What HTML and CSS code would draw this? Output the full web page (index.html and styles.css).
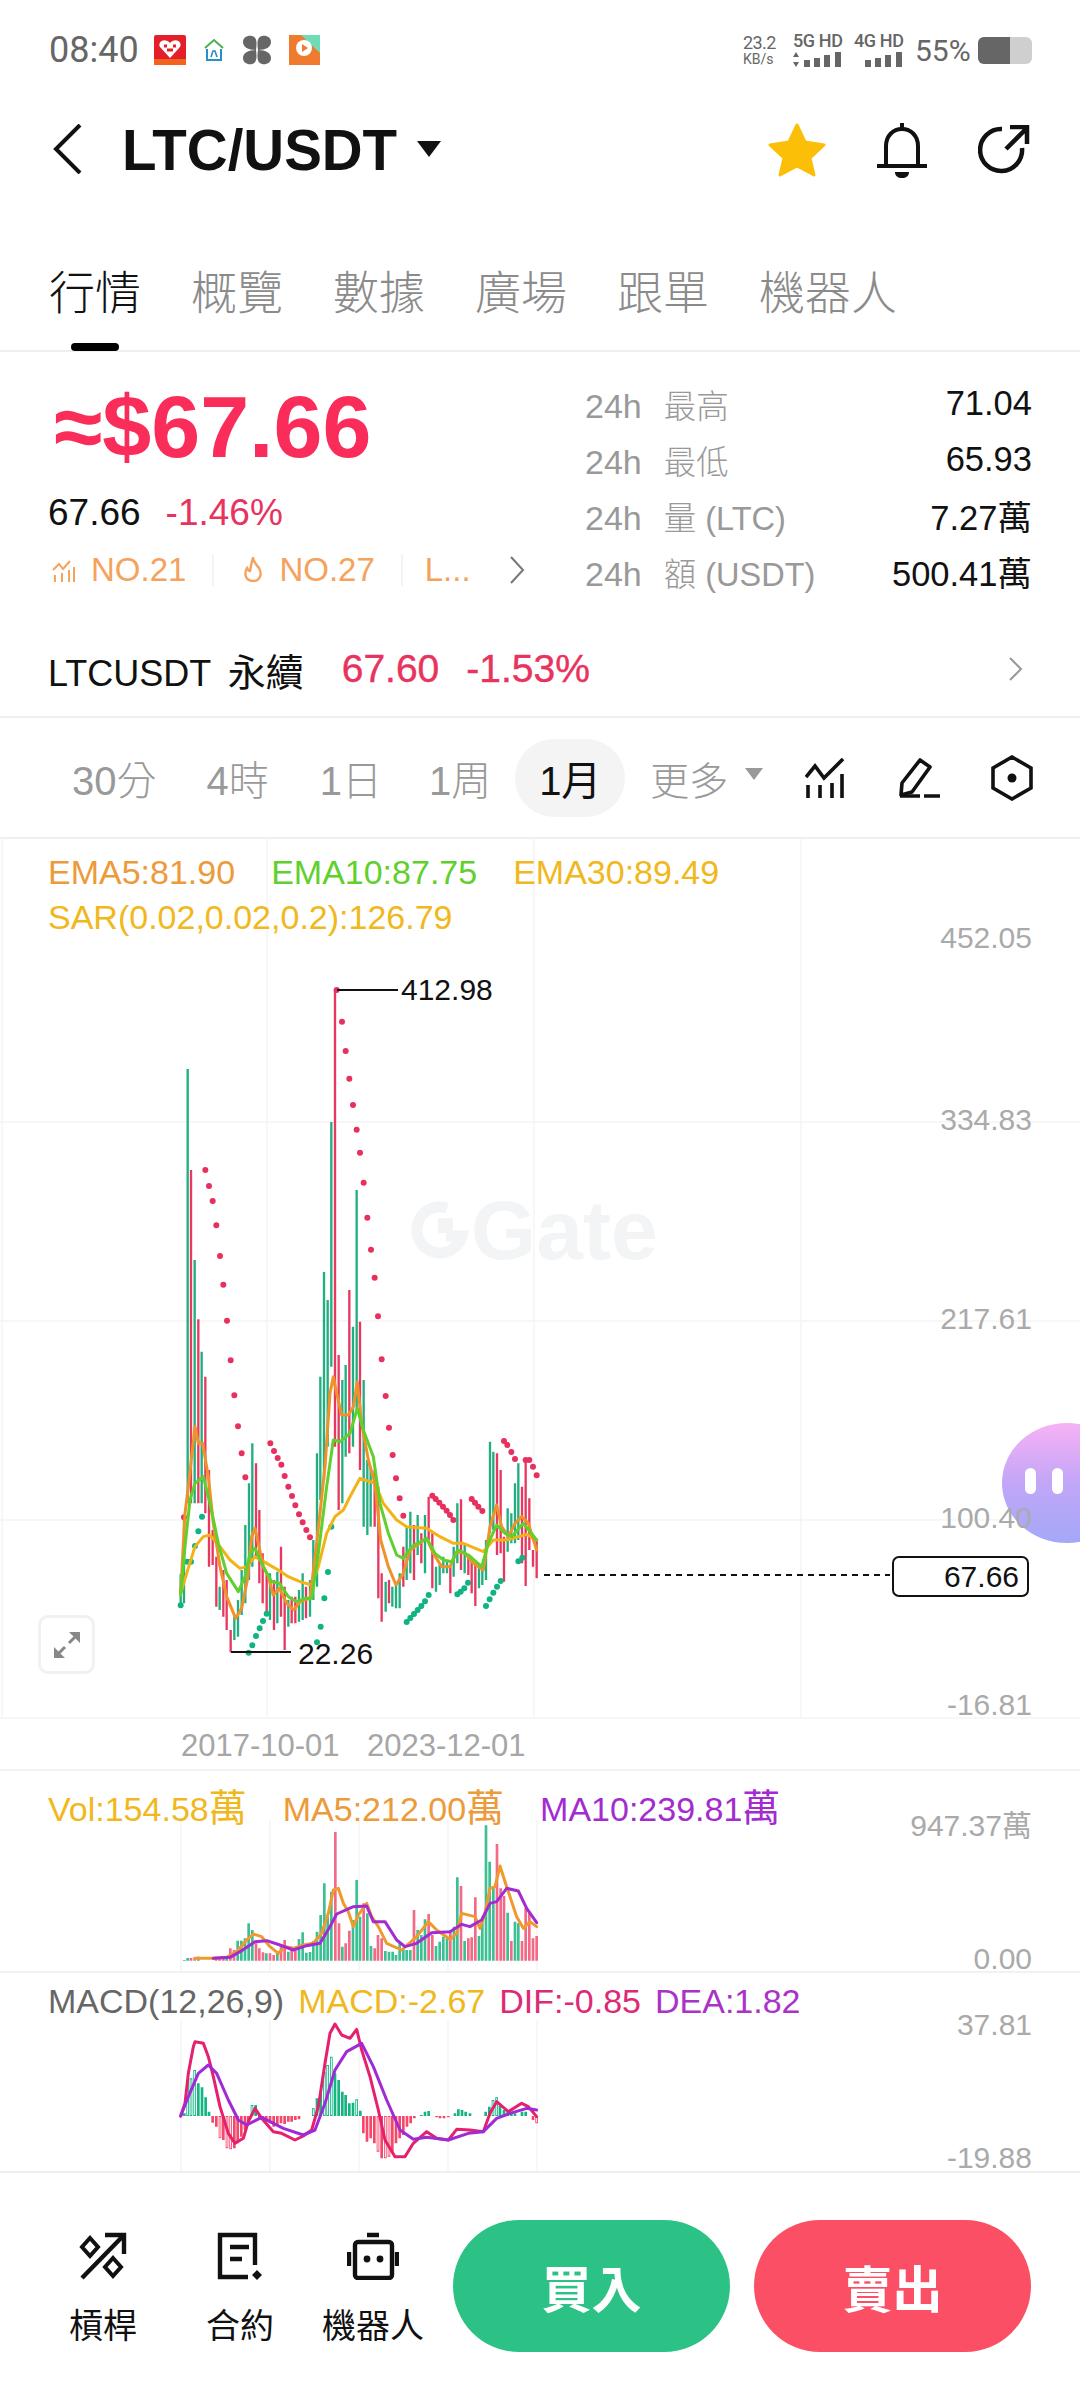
FILE: index.html
```html
<!DOCTYPE html>
<html lang="zh-Hant">
<head>
<meta charset="utf-8">
<title>LTC/USDT</title>
<link rel="stylesheet" href="styles.css">
</head>
<body>
<div class="screen">
  <div class="status">
    <div class="status-left">
      <span class="time">08:40</span>
      <svg class="app-icon" width="32" height="30" viewBox="0 0 32 30"><rect width="32" height="30" rx="2" fill="#e3202a"/><path d="M16 23 6 12c-3-5 5-10 10-4 5-6 13-1 10 4z" fill="#fff"/><path d="M10 11h3M19 11h3M13 15h6" stroke="#e3202a" stroke-width="3"/><rect y="24" width="32" height="6" fill="#f0641e"/></svg>
      <svg class="app-icon" width="22" height="24" viewBox="0 0 22 24"><path d="M2 10 11 2l9 8" fill="none" stroke="#4caf50" stroke-width="2"/><path d="M4 11v11h14V11" fill="none" stroke="#2a8fc4" stroke-width="2"/><path d="M8 19l2-6h2l2 6" fill="none" stroke="#2a8fc4" stroke-width="1.6"/></svg>
      <svg class="app-icon" width="30" height="30" viewBox="0 0 30 30"><path d="M14 15C6 15 1 12 1 7s5-7 9-6c5 1 5 7 4 14zM16 15c8 0 13-3 13-8s-5-7-9-6c-5 1-5 7-4 14zM14 15c-8 0-13 3-13 8s5 7 9 6c5-1 5-7 4-14zM16 15c8 0 13 3 13 8s-5 7-9 6c-5-1-5-7-4-14z" fill="#666"/></svg>
      <svg class="app-icon" width="31" height="30" viewBox="0 0 31 30"><rect width="31" height="30" fill="#f07a2d"/><path d="M12 0h19v18z" fill="#6fdcb8"/><circle cx="15" cy="13" r="8" fill="#fff"/><path d="M13 9l6 4-6 4z" fill="#f07a2d"/></svg>
    </div>
    <div class="status-right">
      <div class="speed"><span>23.2</span><span class="speed-unit">KB/s</span></div>
      <div class="net">
        <span class="net-label">5G HD</span>
        <svg width="50" height="15" viewBox="0 0 50 15"><path d="M3 0l3 5H0zM3 15l3-5H0z" fill="#666"/><path d="M14 15V8M24 15V6M34 15V3M45 15V0" stroke="#666" stroke-width="6"/></svg>
      </div>
      <div class="net">
        <span class="net-label">4G HD</span>
        <svg width="50" height="15" viewBox="0 0 50 15"><path d="M14 15V8M24 15V6M34 15V3M45 15V0" stroke="#666" stroke-width="6"/></svg>
      </div>
      <span class="battery-pct">55%</span>
      <div class="battery"><div class="battery-fill"></div></div>
    </div>
  </div>

  <div class="nav">
    <svg class="back" width="30" height="50" viewBox="0 0 30 50"><path d="M28 1 4 25l24 24" fill="none" stroke="#111" stroke-width="4"/></svg>
    <span class="pair">LTC/USDT</span>
    <svg class="pair-caret" width="24" height="16" viewBox="0 0 24 16"><path d="M0 0h24L12 16z" fill="#111"/></svg>
    <div class="nav-icons">
      <svg width="58" height="54" viewBox="0 0 58 54"><path d="M29 2l8 17 19 3-14 13 4 17-17-9-17 9 4-17L2 22l19-3z" fill="#fcbf07" stroke="#fcbf07" stroke-width="3" stroke-linejoin="round"/></svg>
      <svg width="50" height="56" viewBox="0 0 50 56"><path d="M9 44V24C9 14 16 7 25 7s16 7 16 17v20" fill="none" stroke="#111" stroke-width="4"/><path d="M25 1v6M0 44h50" stroke="#111" stroke-width="4"/><path d="M18 50h14c0 4-3 6-7 6s-7-2-7-6z" fill="#111"/></svg>
      <svg width="52" height="50" viewBox="0 0 52 50"><path d="M44 23a21 21 0 1 1-20-19" fill="none" stroke="#111" stroke-width="4.5"/><path d="M28 24 48 4M32 2h17v17" fill="none" stroke="#111" stroke-width="4.5"/></svg>
    </div>
  </div>

  <div class="tabs">
    <span class="tab tab-active">行情</span>
    <span class="tab">概覽</span>
    <span class="tab">數據</span>
    <span class="tab">廣場</span>
    <span class="tab">跟單</span>
    <span class="tab">機器人</span>
  </div>

  <div class="summary">
    <div class="summary-left">
      <div class="price">≈$67.66</div>
      <div class="sub-price"><span>67.66</span><span class="down">-1.46%</span></div>
      <div class="ranks">
        <svg width="24" height="24" viewBox="0 0 24 24"><path d="M1 12l6-6 4 5 7-8" fill="none" stroke="#f5a25d" stroke-width="2"/><path d="M3 24v-7M10 24v-9M17 24V12M22 24V9" stroke="#f5a25d" stroke-width="2"/></svg>
        <span class="rank">NO.21</span>
        <span class="rank-sep"></span>
        <svg width="22" height="26" viewBox="0 0 22 26"><path d="M11 1c1 5 3 6 6 10 3 5 2 13-6 13S2 16 5 11c1 2 2 3 3 3 1-4 1-8 3-13z" fill="none" stroke="#f5a25d" stroke-width="2.4"/></svg>
        <span class="rank">NO.27</span>
        <span class="rank-sep rank-sep-last"></span>
        <span class="rank">L...</span>
        <svg class="rank-more" width="16" height="28" viewBox="0 0 16 28"><path d="M2 1l12 13L2 27" fill="none" stroke="#777" stroke-width="2"/></svg>
      </div>
    </div>
    <div class="stats">
      <div class="stat"><span class="stat-label"><span class="stat-key">24h</span>最高</span><span>71.04</span></div>
      <div class="stat"><span class="stat-label"><span class="stat-key">24h</span>最低</span><span>65.93</span></div>
      <div class="stat"><span class="stat-label"><span class="stat-key">24h</span>量 (LTC)</span><span>7.27萬</span></div>
      <div class="stat"><span class="stat-label"><span class="stat-key">24h</span>額 (USDT)</span><span>500.41萬</span></div>
    </div>
  </div>

  <div class="perp">
    <span class="perp-name">LTCUSDT <span class="perp-cjk">永續</span></span>
    <span class="perp-val">67.60</span>
    <span class="perp-val">-1.53%</span>
    <svg class="perp-more" width="16" height="24" viewBox="0 0 16 24"><path d="M2 1l11 11L2 23" fill="none" stroke="#999" stroke-width="2"/></svg>
  </div>

  <div class="timebar">
    <span class="tf tf-30">30分</span>
    <span class="tf tf-4">4時</span>
    <span class="tf tf-1d">1日</span>
    <span class="tf tf-1w">1周</span>
    <span class="tf tf-active">1月</span>
    <span class="tf tf-more">更多</span>
    <svg class="tf-caret" width="18" height="12" viewBox="0 0 18 12"><path d="M0 0h18L9 12z" fill="#999"/></svg>
    <div class="tools">
      <svg width="40" height="40" viewBox="0 0 40 40"><path d="M1 19 10 8l9 12L38 1" fill="none" stroke="#111" stroke-width="3.6"/><path d="M3 40V27M15 40V27M27 40V25M37 40V16" stroke="#111" stroke-width="3.6"/></svg>
      <svg width="42" height="40" viewBox="0 0 42 40"><path d="M2 37 3 25 21 2l10 7-18 25z" fill="none" stroke="#111" stroke-width="3.6" stroke-linejoin="round"/><path d="M1 38h20M25 38h16" stroke="#111" stroke-width="3.6"/></svg>
      <svg width="42" height="46" viewBox="0 0 42 46"><path d="M21 2 40 13v20L21 44 2 33V13z" fill="none" stroke="#111" stroke-width="3.6"/><circle cx="21" cy="23" r="4.5" fill="#111"/></svg>
    </div>
  </div>

  <section class="panel panel-main">
    <div class="bubble"><i></i><i></i></div>
    <svg class="plot" width="1080" height="930" viewBox="0 839 1080 930">
      <path class="grid" d="M0 1122H1080M0 1321H1080M0 1520H1002M0 1718H1080M267 839V1718M534 839V1718M801 839V1718M2 839V1718"/>
      <text class="axis" x="1032" y="948" text-anchor="end">452.05</text>
      <text class="axis" x="1032" y="1130" text-anchor="end">334.83</text>
      <text class="axis" x="1032" y="1329" text-anchor="end">217.61</text>
      <text class="axis" x="1032" y="1528" text-anchor="end">100.40</text>
      <text class="axis" x="1032" y="1715" text-anchor="end">-16.81</text>
      <text class="axis date" x="181" y="1756">2017-10-01</text>
      <text class="axis date" x="367" y="1756">2023-12-01</text>
      <g class="watermark">
        <path d="M447 1208a23 23 0 1 0 15 28h-16" fill="none" stroke="#f2f4f5" stroke-width="11"/>
        <rect x="438" y="1218" width="15" height="15" fill="#f2f4f5"/>
        <text x="471" y="1259">Gate</text>
      </g>
      <g transform="translate(140 1280) scale(.33333)">
        <path class="candle candle-g" d="M122 883V975M132 720V970M143 -633V670M164 -60V670M185 215V670M239 920V990M283 1010V1080M294 960V1070M305 870V1005M316 735V970M327 610V900M337 490V860M390 880V1020M412 875V1030M445 960V1040M477 930V1025M488 880V1020M510 900V1010M520 780V960M531 520V920M541 290V660M552 -24V600M563 60V500M574 -474V260M607 300V670M617 255V530M639 140V500M650 -270V400M671 300V740M682 540V765M692 560V740M737 905V995M757 920V980M768 915V985M779 880V985M800 740V900M811 695V880M833 705V825M855 705V880M888 860V935M899 855V915M910 830V880M921 840V880M941 800V890M952 670V850M974 790V880M1017 850V925M1027 850V915M1038 780V900M1050 485V760M1060 515V750M1103 685V815M1114 700V790M1125 610V790M1135 550V780"/>
        <path class="candle candle-r" d="M153 -330V670M175 118V670M196 290V700M207 570V860M218 750V855M229 830V980M250 870V1010M260 900V1050M272 1050V1117M348 550V830M358 690V910M368 820V970M380 880V1000M402 900V1050M423 800V1010M434 920V1110M455 950V1030M466 950V1030M498 920V1015M585 -870V500M596 225V690M628 30V520M660 125V570M704 570V740M715 620V955M725 880V1025M747 900V970M790 800V920M822 735V900M844 760V850M866 650V780M877 760V925M931 860V940M963 658V870M985 830V885M995 830V940M1006 850V978M1071 520V825M1082 570V820M1092 770V905M1146 620V850M1157 540V918M1168 655V810M1179 810V860M1190 780V895"/>
        <path class="dots dots-r" d="M590 -870h0M606 -775h0M617 -687h0M628 -604h0M639 -525h0M650 -451h0M660 -382h0M671 -292h0M682 -187h0M693 -91h0M704 -7h0M196 -330h0M207 -282h0M218 -237h0M229 -164h0M240 -72h0M250 14h0M261 122h0M272 241h0M283 346h0M294 439h0M305 520h0M316 592h0M132 712h0M391 490h0M402 513h0M413 534h0M424 554h0M434 588h0M445 620h0M456 648h0M466 676h0M477 703h0M488 727h0M499 750h0M510 772h0M714 109h0M725 238h0M737 348h0M747 443h0M758 525h0M768 595h0M779 655h0M790 707h0M877 647h0M887 657h0M898 668h0M909 680h0M920 692h0M930 705h0M940 720h0M995 657h0M1005 668h0M1015 680h0M1027 693h0M1092 483h0M1102 495h0M1114 516h0M1125 537h0M1157 540h0M1168 540h0M1179 560h0M1190 586h0"/>
        <path class="dots dots-g" d="M122 976h0M142 845h0M153 845h0M165 798h0M175 754h0M186 710h0M326 1118h0M337 1096h0M348 1068h0M359 1045h0M369 1023h0M380 1001h0M531 1087h0M542 1040h0M553 955h0M564 876h0M574 740h0M800 1026h0M811 1014h0M822 1002h0M833 990h0M844 978h0M855 964h0M866 945h0M952 943h0M962 935h0M973 925h0M984 908h0M1038 978h0M1049 958h0M1060 938h0M1071 920h0M1082 903h0M1135 844h0M1147 833h0"/>
        <polyline class="ma ma-yellow" points="122,940 140,880 165,800 190,770 210,765 240,800 270,840 300,865 320,860 345,830 380,850 415,870 445,890 480,905 515,915 535,860 560,760 585,710 610,690 630,650 660,595 705,610 730,670 770,720 800,740 860,745 900,770 940,790 970,790 1030,815 1060,780 1100,780 1160,763 1190,780"/>
        <polyline class="ma ma-orange" points="122,940 135,700 145,620 165,440 175,490 188,490 205,590 220,730 240,860 260,950 287,1015 305,985 322,900 335,770 345,745 355,790 370,860 385,890 400,945 418,925 440,970 462,990 480,965 510,955 530,790 555,560 570,340 580,290 590,340 605,405 625,405 640,380 652,305 665,430 685,540 705,610 722,780 745,860 768,915 790,880 810,810 860,775 880,820 905,860 930,860 950,815 975,820 1000,850 1030,870 1050,740 1070,675 1085,740 1105,770 1125,730 1145,710 1165,730 1190,810"/>
        <polyline class="ma ma-green" points="122,945 135,800 150,660 165,610 190,590 210,670 235,790 260,880 295,935 315,890 330,820 345,805 370,860 395,905 418,910 445,950 470,965 495,955 515,955 535,820 560,620 580,480 600,485 630,460 652,385 670,450 700,530 720,670 745,760 770,825 790,835 815,800 860,775 885,820 910,840 935,845 955,810 985,825 1025,860 1045,790 1070,735 1095,760 1115,770 1150,730 1190,780"/>
      </g>
      <path class="leader" d="M337 990H398M231 1652H291"/>
      <text class="mark" x="401" y="1000">412.98</text>
      <text class="mark" x="298" y="1664">22.26</text>
      <path class="last-line" d="M544 1575H890"/>
    </svg>
    <div class="legend legend-1">
      <span class="c-orange">EMA5:81.90</span>
      <span class="c-green">EMA10:87.75</span>
      <span class="c-yellow">EMA30:89.49</span>
    </div>
    <div class="legend legend-2"><span class="c-yellow">SAR(0.02,0.02,0.2):126.79</span></div>
    <div class="last-tag">67.66</div>
    <button class="expand">
      <svg width="30" height="30" viewBox="0 0 30 30"><path d="M17 13 27 3M3 27l10-10" stroke="#888" stroke-width="3"/><path d="M17 2h11v11zM2 17v11h11z" fill="#888"/></svg>
    </button>
  </section>

  <section class="panel panel-vol">
    <svg class="plot" width="1080" height="203" viewBox="0 1769 1080 203">
      <path class="grid" d="M181 1820V1972M270 1820V1972M359 1820V1972M448 1820V1972M537 1820V1972"/>
      <text class="axis" x="1032" y="1836" text-anchor="end">947.37萬</text>
      <text class="axis" x="1032" y="1969" text-anchor="end">0.00</text>
      <g transform="translate(140 1780) scale(.33333)">
        <path class="bar bar-g" d="M133 542V540M143 542V534M175 542V530M260 542V530M293 542V482M304 542V482M315 542V475M326 542V430M337 542V450M379 542V520M412 542V515M445 542V515M477 542V477M488 542V457M499 542V518M510 542V516M520 542V483M531 542V455M542 542V405M553 542V310M563 542V405M574 542V335M607 542V500M639 542V420M650 542V300M660 542V410M682 542V400M693 542V498M736 542V513M747 542V515M758 542V515M768 542V525M779 542V490M790 542V505M800 542V510M811 542V510M833 542V450M844 542V465M855 542V418M888 542V498M899 542V485M910 542V470M921 542V475M942 542V440M952 542V292M974 542V483M1017 542V468M1027 542V410M1038 542V136M1049 542V245M1060 542V320M1103 542V398M1125 542V425M1135 542V430"/>
        <path class="bar bar-r" d="M153 542V534M164 542V532M228 542V534M239 542V533M250 542V533M271 542V505M282 542V510M348 542V490M358 542V505M369 542V517M390 542V520M401 542V525M423 542V500M434 542V480M455 542V500M466 542V512M586 542V156M597 542V430M617 542V490M628 542V452M671 542V370M704 542V505M714 542V465M725 542V475M822 542V390M866 542V402M877 542V465M931 542V450M963 542V318M985 542V475M995 542V472M1006 542V352M1071 542V192M1082 542V325M1092 542V348M1114 542V483M1146 542V483M1157 542V385M1168 542V395M1179 542V475M1190 542V468"/>
        <polyline class="ma ma-vol5" points="165,535 220,535 260,532 290,515 320,480 340,462 365,470 390,500 415,520 435,500 460,505 490,495 520,490 545,460 565,400 580,330 595,325 610,370 625,395 640,440 655,405 680,370 695,410 715,440 740,490 785,510 830,470 865,425 890,450 930,478 950,460 965,400 1005,410 1020,445 1035,400 1050,325 1065,320 1080,258 1100,320 1130,410 1150,445 1170,425 1190,440"/>
        <polyline class="ma ma-vol10" points="220,535 270,532 300,515 345,485 380,482 420,495 460,510 500,497 540,490 570,440 590,402 640,380 680,378 700,425 735,425 770,480 795,500 830,490 875,458 930,455 965,433 990,440 1025,420 1050,370 1070,365 1100,325 1135,333 1160,385 1190,428"/>
      </g>
    </svg>
    <div class="legend legend-vol">
      <span class="c-yellow">Vol:154.58<span class="cjk">萬</span></span>
      <span class="c-orange">MA5:212.00<span class="cjk">萬</span></span>
      <span class="c-purple">MA10:239.81<span class="cjk">萬</span></span>
    </div>
  </section>

  <section class="panel panel-macd">
    <svg class="plot" width="1080" height="198" viewBox="0 1973 1080 198">
      <path class="grid" d="M181 2020V2171M270 2020V2171M359 2020V2171M448 2020V2171M537 2020V2171"/>
      <text class="axis" x="1032" y="2035" text-anchor="end">37.81</text>
      <text class="axis" x="1032" y="2168" text-anchor="end">-19.88</text>
      <g transform="translate(140 1780) scale(.33333)">
        <path class="bar-macd bar-macd-g" d="M133 1008V1000M143 1008V900M153 1008V895M164 1008V870M175 1008V910M186 1008V922M197 1008V952M207 1008V995M336 1008V975M347 1008V975M520 1008V985M531 1008V955M542 1008V935M553 1008V875M563 1008V855M574 1008V830M585 1008V880M596 1008V900M607 1008V935M617 1008V945M628 1008V970M639 1008V968M650 1008V958M661 1008V992M844 1008V1005M855 1008V995M866 1008V993M945 1008V1000M955 1008V988M966 1008V990M977 1008V995M990 1008V1000M1037 1008V995M1048 1008V980M1059 1008V960M1070 1008V952M1080 1008V978M1092 1008V990M1103 1008V995M1114 1008V1000M1125 1008V1000M1146 1008V995M1157 1008V995"/>
        <path class="bar-macd bar-macd-r" d="M218 1008V1028M229 1008V1040M240 1008V1075M250 1008V1080M261 1008V1105M272 1008V1108M283 1008V1105M293 1008V1090M304 1008V1070M315 1008V1050M325 1008V1035M358 1008V1020M369 1008V1018M379 1008V1025M390 1008V1030M401 1008V1040M412 1008V1035M423 1008V1030M434 1008V1032M445 1008V1025M455 1008V1025M466 1008V1020M477 1008V1018M670 1008V1060M681 1008V1085M692 1008V1075M703 1008V1090M714 1008V1115M725 1008V1135M736 1008V1135M747 1008V1130M757 1008V1115M768 1008V1090M779 1008V1075M790 1008V1065M801 1008V1040M812 1008V1030M823 1008V1015M890 1008V1012M900 1008V1015M912 1008V1015M925 1008V1012M1179 1008V1020M1190 1008V1030"/>
        <path class="bar-hollow" d="M143 1005V903M153 1005V898M164 1005V873M336 1005V978M520 1005V988M553 1005V878M563 1005V858M574 1005V833M650 1005V961M1059 1005V963M1070 1005V955M240 1011V1072M261 1011V1102M272 1011V1105M714 1011V1112M736 1011V1132M747 1011V1127M1190 1011V1027"/>
        <polyline class="ma ma-dif" points="122,1008 135,970 145,880 160,800 165,785 190,790 205,830 220,890 240,980 265,1060 285,1090 310,1075 325,1025 345,985 365,1015 400,1055 425,1060 465,1080 490,1068 515,1050 535,980 555,850 570,760 585,732 605,765 630,775 650,748 665,810 690,890 715,990 735,1080 765,1130 795,1130 820,1090 860,1055 890,1075 925,1080 950,1048 990,1050 1030,1055 1050,1000 1070,965 1105,995 1145,970 1165,980 1190,1010"/>
        <polyline class="ma ma-dea" points="122,1008 145,950 175,880 205,855 230,880 265,960 295,1020 320,1035 365,1012 430,1045 490,1065 525,1050 555,970 585,870 620,815 665,790 700,860 740,960 780,1050 820,1078 860,1072 925,1080 985,1060 1030,1055 1070,1015 1110,1000 1160,985 1190,990"/>
      </g>
    </svg>
    <div class="legend legend-macd">
      <span class="c-grey">MACD(12,26,9)</span>
      <span class="c-yellow">MACD:-2.67</span>
      <span class="c-pink">DIF:-0.85</span>
      <span class="c-violet">DEA:1.82</span>
    </div>
  </section>

  <div class="bottom">
    <div class="shortcut">
      <svg width="48" height="48" viewBox="0 0 48 48"><path d="M3 46 44 4M26 3h19v19" fill="none" stroke="#111" stroke-width="4.4"/><path d="M11 6l8 9-8 9-8-9zM34 26l8 9-8 9-8-9z" fill="none" stroke="#111" stroke-width="4"/></svg>
      <span>槓桿</span>
    </div>
    <div class="shortcut shortcut-2">
      <svg width="48" height="48" viewBox="0 0 48 48"><path d="M39 33V3H4v42h28" fill="none" stroke="#111" stroke-width="4.4"/><path d="M14 15h19M14 27h12" stroke="#111" stroke-width="4.4"/><path d="M41 38l5 5-5 5-5-5z" fill="#111"/></svg>
      <span>合約</span>
    </div>
    <div class="shortcut shortcut-3">
      <svg width="52" height="48" viewBox="0 0 52 48"><rect x="8" y="10" width="37" height="36" rx="3" fill="none" stroke="#111" stroke-width="4.4"/><path d="M20 3h12M2 20v14M50 20v14" stroke="#111" stroke-width="4.4"/><circle cx="20" cy="27" r="3.4" fill="#111"/><circle cx="33" cy="27" r="3.4" fill="#111"/></svg>
      <span>機器人</span>
    </div>
    <button class="trade trade-buy">買入</button>
    <button class="trade trade-sell">賣出</button>
  </div>
</div>
</body>
</html>
```

FILE: styles.css
```css
* { box-sizing: border-box; }
html, body { margin: 0; padding: 0; background: #fff; }
body { width: 1080px; height: 2400px; overflow: hidden; font-family: "Liberation Sans", "Noto Sans CJK TC", sans-serif; color: #111; }
.screen { width: 1080px; height: 2400px; display: flex; flex-direction: column; }

.status { height: 100px; display: flex; justify-content: space-between; align-items: center; padding: 0 48px 0 49px; }
.status-left { display: flex; align-items: center; gap: 17px; }
.time { font-family: Roboto, sans-serif; font-size: 36px; color: #666; width: 88px; }
.app-icon { display: block; }
.status-right { display: flex; align-items: center; color: #666; }
.speed { display: flex; flex-direction: column; font-family: Roboto, sans-serif; font-size: 18px; line-height: 18px; width: 50px; letter-spacing: -.6px; }
.speed-unit { font-size: 14px; line-height: 14px; letter-spacing: 0; }
.net { display: flex; flex-direction: column; width: 61px; gap: 4px; }
.net-label { font-family: Roboto, sans-serif; font-size: 18px; line-height: 15px; font-weight: 500; letter-spacing: -.4px; white-space: nowrap; }
.battery-pct { font-size: 30px; width: 63px; font-family: Roboto, sans-serif; }
.battery { width: 54px; height: 27px; border-radius: 6px; background: #cfcfcf; overflow: hidden; }
.battery-fill { width: 32px; height: 27px; background: #666; }

.nav { height: 100px; display: flex; align-items: center; padding: 0 50px 0 52px; }
.back { display: block; margin-top: -2px; }
.pair { font-size: 56.5px; font-weight: 700; margin-left: 40px; line-height: 60px; margin-top: 2px; }
.pair-caret { margin-left: 20px; margin-top: -2px; }
.nav-icons { margin-left: auto; display: flex; align-items: center; gap: 51px; }
.nav-icons svg { display: block; }

.tabs { height: 152px; padding: 28px 0 0 49px; display: flex; gap: 50px; border-bottom: 2px solid #efefef; align-items: center; }
.tab { font-family: "Noto Sans CJK TC", sans-serif; font-size: 46px; font-weight: 300; line-height: 60px; color: #8b8b8b; position: relative; }
.tab-active { color: #111; }
.tab-active::after { content: ""; position: absolute; left: 22px; width: 48px; height: 8px; bottom: -32px; background: #000; border-radius: 4px; }

.summary { display: flex; height: 278px; padding: 25px 48px 0 48px; }
.summary-left { width: 537px; }
.price { font-size: 88px; font-weight: 700; color: #fa2d5a; line-height: 90px; margin-left: 6px; margin-top: 5px; }
.sub-price { font-size: 37px; line-height: 44px; margin-top: 19px; display: flex; gap: 25px; }
.down { color: #e8335f; }
.ranks { display: flex; align-items: center; margin-top: 15px; height: 40px; color: #f5a25d; font-size: 33px; padding-left: 4px; }
.rank { margin-left: 15px; }
.rank-sep { width: 2px; height: 32px; background: #f4f4f4; margin: 0 28px 0 26px; }
.rank-sep + .rank { margin-left: 0; }
.rank-sep-last { margin-right: 22px; }
.rank-more { margin-left: 38px; }
.stats { flex: 1; display: flex; flex-direction: column; margin-top: -2px; }
.stat { height: 56px; flex: none; display: flex; align-items: center; justify-content: space-between; font-size: 34.5px; }
.stat-label { color: #999; font-size: 32.5px; font-weight: 300; }
.stat-key { font-size: 34px; margin-right: 22px; }

.perp { height: 88px; border-bottom: 2px solid #efefef; display: flex; align-items: center; padding: 0 56px 8px 48px; }
.perp-name { font-size: 36px; margin-right: 38px; }
.perp-cjk { font-size: 38px; margin-left: 7px; }
.perp-val { font-size: 39px; color: #e8335f; margin-right: 27px; -webkit-text-stroke: .4px #e8335f; }
.perp-more { margin-left: auto; }

.timebar { height: 121px; border-bottom: 2px solid #efefef; display: flex; align-items: center; padding-left: 72px; }
.tf { font-size: 40px; color: #999; font-weight: 300; }
.tf-4 { margin-left: 50px; }
.tf-1d { margin-left: 51px; }
.tf-1w { margin-left: 47px; }
.tf-active { color: #111; background: #f4f4f4; border-radius: 40px; width: 110px; height: 78px; display: flex; align-items: center; justify-content: center; margin-left: 24px; font-weight: 400; }
.tf-more { margin-left: 25px; font-size: 39px; }
.tf-caret { margin-left: 17px; margin-top: -8px; }
.tools { margin-left: 42px; display: flex; align-items: center; gap: 54px; }
.tools svg { display: block; }
.tools svg:last-child { margin-left: -4px; }

.panel { position: relative; flex: none; }
.panel-main { height: 930px; }
.panel-main::after { content: ""; position: absolute; left: 0; right: 0; bottom: -2px; height: 2px; background: #f2f2f2; }
.panel-vol { height: 204px; border-bottom: 2px solid #f2f2f2; }
.panel-macd { height: 200px; border-bottom: 2px solid #efefef; }
.plot { display: block; position: relative; }
.grid { stroke: #f5f5f5; stroke-width: 1.5; fill: none; }
.axis { font-size: 30px; fill: #aaa; }
.date { font-size: 31px; fill: #a6a6a6; }
.watermark text { font-size: 84px; font-weight: 700; fill: #f2f4f5; }
.candle { stroke-width: 7; fill: none; }
.candle-g { stroke: #21ae80; }
.candle-r { stroke: #e8385f; }
.dots { fill: none; stroke-width: 18; stroke-linecap: round; }
.dots-r { stroke: #e8305f; }
.dots-g { stroke: #10b384; }
.ma { fill: none; stroke-width: 9; stroke-linejoin: round; stroke-linecap: round; }
.ma-yellow { stroke: #f3b315; }
.ma-orange { stroke: #f0922a; }
.ma-green { stroke: #5fd02c; }
.ma-vol5 { stroke: #ee9a2e; }
.ma-vol10 { stroke: #a32bd0; }
.ma-dif { stroke: #e4206f; }
.ma-dea { stroke: #a02bd4; }
.bar { stroke-width: 8; fill: none; }
.bar-g { stroke: #3cbf93; }
.bar-r { stroke: #f46a86; }
.bar-macd { stroke-width: 8; fill: none; }
.bar-macd-g { stroke: #14b582; }
.bar-macd-r { stroke: #f5476a; }
.bar-hollow { stroke: #fff; stroke-width: 3; fill: none; }
.leader { stroke: #111; stroke-width: 2; fill: none; }
.mark { font-size: 30px; fill: #111; }
.last-line { stroke: #111; stroke-width: 2; stroke-dasharray: 6 5; fill: none; }

.legend { position: absolute; left: 48px; display: flex; font-size: 34px; line-height: 40px; white-space: nowrap; }
.legend-1 { top: 13px; gap: 36px; }
.legend-2 { top: 58px; }
.legend-vol { top: 19px; gap: 36px; }
.legend-macd { top: 8px; gap: 14px; }
.cjk { font-size: 38px; }
.c-orange { color: #ec9a3a; }
.c-green { color: #5fd02c; }
.c-yellow { color: #f0b81c; }
.c-purple { color: #a32bd0; }
.c-grey { color: #666; }
.c-pink { color: #dd2a75; }
.c-violet { color: #a933c9; }

.last-tag { position: absolute; left: 892px; top: 717px; width: 137px; height: 41px; border: 2px solid #111; border-radius: 7px; background: #fff; font-size: 30px; line-height: 37px; text-align: right; padding-right: 8px; }
.expand { position: absolute; left: 38px; top: 776px; width: 57px; height: 59px; padding: 0; border: 3px solid #f1f1f1; border-radius: 10px; background: #fff; display: flex; align-items: center; justify-content: center; }
.expand svg { display: block; }
.bubble { position: absolute; left: 1002px; top: 584px; width: 130px; height: 120px; border-radius: 50%; background: linear-gradient(180deg, #f7b2f5 0%, #c2a6f7 50%, #a3a8f9 100%); }
.bubble i { position: absolute; top: 45px; width: 11px; height: 26px; border-radius: 6px; background: #fff; }
.bubble i:first-child { left: 23px; }
.bubble i:last-child { left: 50px; }

.bottom { flex: 1; display: flex; align-items: flex-start; padding: 47px 49px 0 0; }
.shortcut { display: flex; flex-direction: column; align-items: center; font-size: 34px; line-height: 40px; gap: 24px; width: 100px; margin-left: 53px; margin-top: 12px; }
.shortcut span { font-family: "Noto Sans CJK TC", sans-serif; white-space: nowrap; }
.shortcut svg { display: block; }
.shortcut-2 { margin-left: 37px; }
.shortcut-3 { margin-left: 33px; }
.trade { width: 277px; height: 132px; border-radius: 66px; border: 0; color: #fff; font-family: "Noto Sans CJK TC", sans-serif; font-size: 50px; font-weight: 700; padding: 0; }
.trade-buy { background: #2dc285; margin-left: 30px; }
.trade-sell { background: #fa4f64; margin-left: 24px; }
```
